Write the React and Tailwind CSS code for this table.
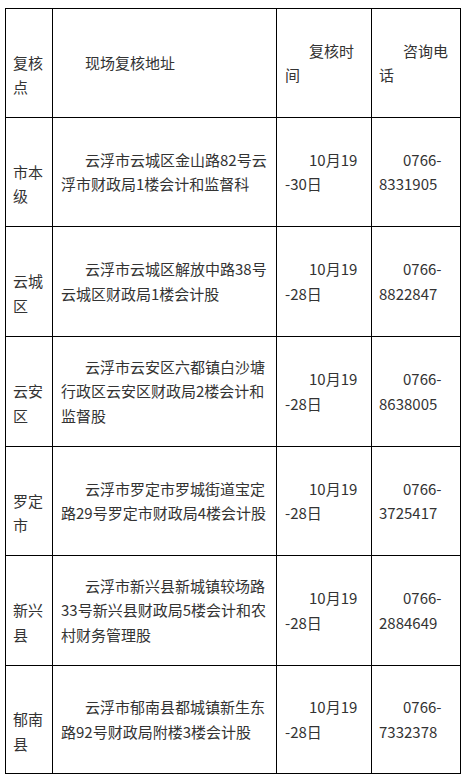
const rows = [
  { h: 'h-[109px]', name: ['市本', '级'], addr: ['云浮市云城区金山路82号云', '浮市财政局1楼会计和监督科'], date: '-30日', tel: '8331905' },
  { h: 'h-[110px]', name: ['云城', '区'], addr: ['云浮市云城区解放中路38号', '云城区财政局1楼会计股'], date: '-28日', tel: '8822847' },
  { h: 'h-[110px]', name: ['云安', '区'], addr: ['云浮市云安区六都镇白沙塘', '行政区云安区财政局2楼会计和', '监督股'], date: '-28日', tel: '8638005' },
  { h: 'h-[109px]', name: ['罗定', '市'], addr: ['云浮市罗定市罗城街道宝定', '路29号罗定市财政局4楼会计股'], date: '-28日', tel: '3725417' },
  { h: 'h-[110px]', name: ['新兴', '县'], addr: ['云浮市新兴县新城镇较场路', '33号新兴县财政局5楼会计和农', '村财务管理股'], date: '-28日', tel: '2884649' },
  { h: 'h-[108px]', name: ['郁南', '县'], addr: ['云浮市郁南县都城镇新生东', '路92号财政局附楼3楼会计股'], date: '-28日', tel: '7332378' },
];

const td = 'border border-black align-middle';

function Lines({ lines, indent = true }) {
  return (
    <div className="whitespace-nowrap">
      {lines.map((l, i) => (
        <div key={i} className={i === 0 && indent ? 'pl-[24px]' : ''}>{l || '\u00a0'}</div>
      ))}
    </div>
  );
}

export default function App() {
  return (
    <div className="min-h-screen bg-white pt-[8px] pl-[5px] text-[15px] leading-[24.5px] text-[#333]" style={{ fontFamily: '"Noto Sans CJK SC", "Noto Sans", sans-serif' }}>
      <table className="table-fixed border-collapse w-[455px]">
        <colgroup>
          <col className="w-[47px]" />
          <col className="w-[224px]" />
          <col className="w-[95px]" />
          <col className="w-[89px]" />
        </colgroup>
        <tbody>
          <tr className="h-[109px]">
            <td className={`${td} pl-[7px]`}><Lines lines={['', '复核', '点']} indent={false} /></td>
            <td className={`${td} pl-[8px]`}><Lines lines={['现场复核地址']} /></td>
            <td className={`${td} pl-[8px]`}><Lines lines={['复核时', '间']} /></td>
            <td className={`${td} pl-[7px]`}><Lines lines={['咨询电', '话']} /></td>
          </tr>
          {rows.map((r, i) => (
            <tr key={i} className={r.h}>
              <td className={`${td} pl-[7px]`}><Lines lines={['', ...r.name]} indent={false} /></td>
              <td className={`${td} pl-[8px]`}><Lines lines={r.addr} /></td>
              <td className={`${td} pl-[8px]`}><Lines lines={['10月19', r.date]} /></td>
              <td className={`${td} pl-[7px]`}><Lines lines={['0766-', r.tel]} /></td>
            </tr>
          ))}
        </tbody>
      </table>
    </div>
  );
}
